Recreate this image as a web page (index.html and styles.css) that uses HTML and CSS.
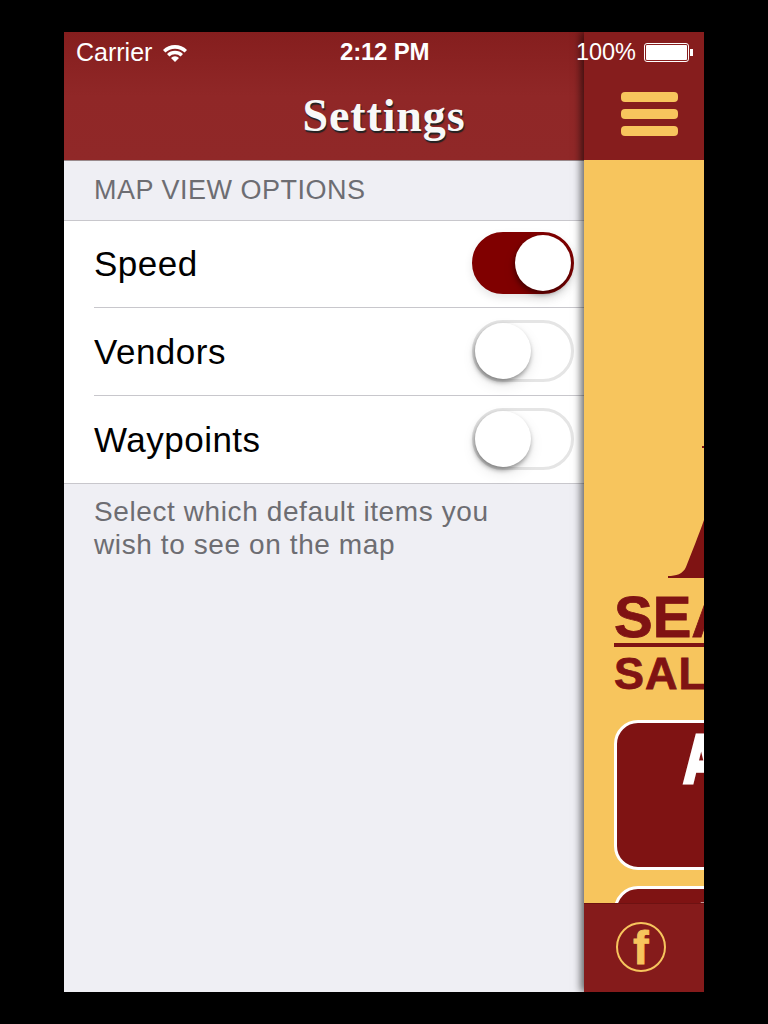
FILE: index.html
```html
<!DOCTYPE html>
<html>
<head lang="en">
    <meta charset="UTF-8">
    <title>Settings</title>
    <link rel="stylesheet" href="styles.css">
</head>
<body>
<div class="screen">
    <div class="status">
        <div class="status-left">
            <span>Carrier</span>
            <svg class="wifi" width="24" height="18" viewBox="0 0 24 18">
                <path d="M0 6 A17 17 0 0 1 24 6 L21.6 8.6 A13.6 13.6 0 0 0 2.4 8.6 Z" fill="#fff"/>
                <path d="M4 10 A11.5 11.5 0 0 1 20 10 L17.6 12.6 A8 8 0 0 0 6.4 12.6 Z" fill="#fff"/>
                <path d="M12 18 L8 14 A5.6 5.6 0 0 1 16 14 Z" fill="#fff"/>
            </svg>
        </div>
        <div class="status-time">2:12 PM</div>
        <div class="status-right">
            <span class="percent">100%</span>
            <div class="battery"><div class="battery-fill"></div></div>
            <div class="battery-tip"></div>
        </div>
    </div>

    <div class="settings">
        <div class="nav"><h1 class="nav-title">Settings</h1></div>
        <div class="section-head">MAP VIEW OPTIONS</div>
        <ul class="rows">
            <li class="row">
                <span>Speed</span>
                <div class="switch on"><div class="knob"></div></div>
            </li>
            <li class="row">
                <span>Vendors</span>
                <div class="switch"><div class="knob"></div></div>
            </li>
            <li class="row">
                <span>Waypoints</span>
                <div class="switch"><div class="knob"></div></div>
            </li>
        </ul>
        <p class="section-foot">Select which default items you wish to see on the map</p>
    </div>

    <div class="drawer">
        <div class="drawer-nav">
            <div class="burger"><i></i><i></i><i></i></div>
        </div>
        <div class="drawer-body">
            <svg class="sail" width="90" height="140" viewBox="0 0 90 140">
                <path d="M88 6 H90 V8 H88 Z" fill="#7f1313"/>
                <path d="M90 80 V138 H54 V136 C62 136 69 134 72 127 C78 112 85 94 90 80 Z" fill="#7f1313"/>
            </svg>
            <div class="brand-top">SEA</div>
            <div class="brand-bottom">SAL</div>
            <div class="big-btn"><span>A</span></div>
            <div class="big-btn"><span>A</span></div>
        </div>
        <div class="drawer-foot">
            <div class="fb">f</div>
        </div>
    </div>
</div>
</body>
</html>
```

FILE: styles.css
```css
*{
    margin: 0;
    padding: 0;
    box-sizing: border-box;
}
ul{
    list-style: none;
}
body{
    background: #000;
    padding: 32px 64px;
    font-family: "Liberation Sans", Arial, sans-serif;
}
.screen{
    width: 640px;
    height: 960px;
    display: flex;
    position: relative;
    overflow: hidden;
    background: #efeff4;
}

/* status bar lies over both panels */
.status{
    position: absolute;
    left: 0;
    top: 0;
    width: 100%;
    height: 40px;
    padding: 0 11px 0 12px;
    z-index: 5;
    display: flex;
    justify-content: space-between;
    align-items: center;
    color: #fff;
    font-size: 25px;
}
.status-left{
    display: flex;
    align-items: center;
    gap: 11px;
}
.wifi{
    margin-top: 1px;
}
.status-time{
    position: absolute;
    left: 276px;
    top: 6px;
    font-weight: bold;
    font-size: 24px;
    letter-spacing: -.2px;
}
.status-right{
    display: flex;
    align-items: center;
}
.percent{
    font-size: 23.5px;
    margin-right: 8px;
}
.battery{
    width: 45px;
    height: 19px;
    border: 1px solid #fff;
    border-radius: 3px;
    padding: 1px;
}
.battery-fill{
    height: 100%;
    background: #fff;
    border-radius: 1px;
}
.battery-tip{
    width: 3px;
    height: 7px;
    background: #fff;
    margin-left: 1px;
}

/* left panel */
.settings{
    width: 520px;
    flex: none;
}
.nav{
    height: 129px;
    padding-top: 38px;
    background: linear-gradient(#851e1e, #902727 50%, #902828);
    border-bottom: 1px solid #9a8a8c;
    display: flex;
    align-items: center;
    justify-content: center;
}
.nav-title{
    font-family: "Liberation Serif", serif;
    font-size: 46px;
    letter-spacing: .9px;
    font-weight: bold;
    color: #f8f8f8;
    text-shadow: 1px 2px 1px #222;
    margin-left: 120px;
}
.section-head{
    height: 60px;
    padding: 14px 30px 0;
    font-size: 27px;
    letter-spacing: .5px;
    color: #6d6d72;
    border-bottom: 1px solid #c8c7cc;
}
.rows{
    background: #fff;
    border-bottom: 1px solid #c8c7cc;
}
.row{
    height: 88px;
    margin-left: 30px;
    padding-right: 10px;
    display: flex;
    justify-content: space-between;
    align-items: center;
    font-size: 35px;
    letter-spacing: .5px;
    color: #000;
    border-bottom: 1px solid #c8c7cc;
}
.row:first-child{
    height: 87px;
}
.row:last-child{
    height: 87px;
    border-bottom: none;
}
.switch{
    width: 102px;
    height: 62px;
    margin-top: -2px;
    border-radius: 31px;
    border: 3px solid #e5e5e5;
    background: #fff;
    position: relative;
}
.switch.on{
    background: #800000;
    border-color: #800000;
    box-shadow: 0 4px 8px rgba(0,0,0,.1);
}
.knob{
    width: 56px;
    height: 56px;
    border-radius: 50%;
    background: #fff;
    box-shadow: -1px 3px 5px rgba(0,0,0,.4), 0 6px 14px rgba(0,0,0,.1);
    position: absolute;
    left: 0;
    top: 0;
}
.switch.on .knob{
    left: 40px;
}
.section-foot{
    padding: 11px 30px 0;
    width: 470px;
    font-size: 28px;
    line-height: 33px;
    letter-spacing: .6px;
    color: #6d6d72;
}

/* right panel */
.drawer{
    width: 120px;
    flex: none;
    background: #f7c55d;
    box-shadow: -3px 0 8px rgba(0,0,0,.6);
    display: flex;
    flex-direction: column;
    overflow: hidden;
    z-index: 2;
}
.drawer-nav{
    height: 128px;
    flex: none;
    background: #861d1d;
    padding: 60px 0 0 37px;
}
.burger{
    width: 57px;
    display: flex;
    flex-direction: column;
    gap: 7px;
}
.burger i{
    display: block;
    height: 10px;
    border-radius: 4px;
    background: #f7c55d;
}
.drawer-body{
    flex: 1;
    padding: 280px 0 0 30px;
    overflow: hidden;
    color: #7f1313;
    font-weight: bold;
}
.sail{
    display: block;
}
.brand-top{
    font-size: 58px;
    line-height: 50px;
    margin-top: 12px;
    padding-bottom: 1px;
    width: 90px;
    border-bottom: 4px solid #7f1313;
    white-space: nowrap;
    -webkit-text-stroke: .8px #7f1313;
}
.brand-bottom{
    font-size: 45px;
    letter-spacing: 1px;
    line-height: 42px;
    margin-top: 6px;
    white-space: nowrap;
    -webkit-text-stroke: .8px #7f1313;
}
.big-btn{
    width: 240px;
    height: 150px;
    margin-top: 25px;
    background: #7f1313;
    border: 3px solid #fff;
    border-radius: 24px;
    color: #fff;
    font-size: 66px;
    line-height: 72px;
    padding-left: 67px;
}
.big-btn span{
    display: inline-block;
    transform: scaleX(.72);
    transform-origin: left center;
    -webkit-text-stroke: 5px #fff;
}
.big-btn + .big-btn{
    margin-top: 16px;
    line-height: 78px;
    padding-left: 72px;
}
.drawer-foot{
    height: 89px;
    flex: none;
    background: #851b1b;
    border-top: 1px solid #6e1212;
    padding: 18px 0 0 32px;
}
.fb{
    width: 50px;
    height: 50px;
    border: 2px solid #f7c55d;
    border-radius: 50%;
    color: #f7c55d;
    font-size: 46px;
    font-weight: bold;
    line-height: 48px;
    text-align: center;
    -webkit-text-stroke: 1px #f7c55d;
}
```
